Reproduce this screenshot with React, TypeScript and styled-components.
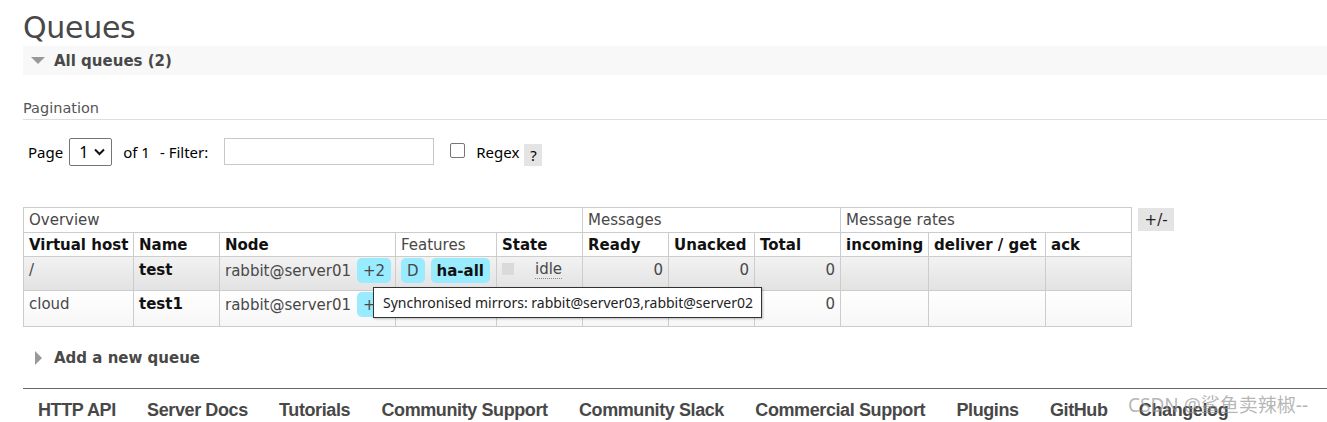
import React from 'react'
import styled, { createGlobalStyle } from 'styled-components'

const GlobalStyle = createGlobalStyle`
  html, body {
    margin: 0;
    padding: 0;
    background: #fff;
  }
  body {
    font-family: 'DejaVu Sans', Verdana, sans-serif;
    font-size: 15px;
    color: #484848;
  }
`

const Page = styled.div`
  position: relative;
  width: 1327px;
  height: 422px;
  overflow: hidden;
  padding-left: 23px;
  box-sizing: border-box;
`

const Title = styled.h1`
  margin: 0;
  padding-top: 10px;
  height: 36px;
  font-size: 30px;
  font-weight: normal;
  line-height: 36px;
  color: #484848;
  letter-spacing: -0.3px;
`

const SectionBar = styled.div`
  display: flex;
  align-items: center;
  height: 29px;
  background: #f8f8f8;
  padding-left: 8px;
  font-weight: bold;
  font-size: 15px;
  color: #484848;
`

const Triangle = styled.span<{ $open?: boolean }>`
  display: inline-block;
  width: 0;
  height: 0;
  ${(p) =>
    p.$open
      ? `margin-right: 9px; border-left: 7px solid transparent; border-right: 7px solid transparent; border-top: 7px solid #999;`
      : `margin-right: 12px; border-top: 7px solid transparent; border-bottom: 7px solid transparent; border-left: 7px solid #999;`}
`

const SubHeading = styled.div`
  margin-top: 23px;
  height: 21px;
  border-bottom: 1px solid #ddd;
  font-size: 14.5px;
  color: #555;
  line-height: 20px;
`

const FilterRow = styled.div`
  display: flex;
  align-items: center;
  margin-top: 18px;
  padding-left: 5px;
  height: 28px;
  color: #000;
  font-family: 'Noto Sans', 'DejaVu Sans', sans-serif;
  font-size: 15px;
`

const Label = styled.span<{ $gap?: number }>`
  margin-right: ${(p) => p.$gap ?? 6}px;
`

const Select = styled.div`
  display: flex;
  align-items: center;
  justify-content: space-between;
  width: 43px;
  height: 28px;
  box-sizing: border-box;
  border: 1px solid #767676;
  border-radius: 2px;
  padding: 0 6px 0 9px;
  margin: 0 11px 0 6px;
  font-size: 16px;
`

const TextInput = styled.div`
  width: 210px;
  height: 27px;
  box-sizing: border-box;
  border: 1px solid #c8c8c8;
  margin-right: 16px;
  margin-bottom: 1px;
`

const CheckBox = styled.span`
  display: inline-block;
  width: 13px;
  height: 13px;
  border: 1px solid #767676;
  border-radius: 2px;
  margin-right: 11px;
  margin-bottom: 3px;
`

const HelpBox = styled.span`
  display: inline-flex;
  align-items: center;
  justify-content: center;
  width: 18px;
  height: 22px;
  background: #e4e4e4;
  margin-left: 5px;
  margin-top: 6px;
`

const TableArea = styled.div`
  display: flex;
  align-items: flex-start;
  margin-top: 41px;
`

const Table = styled.table`
  border-collapse: collapse;
  table-layout: fixed;
  width: 1108px;
  font-size: 15px;
`

const GroupTh = styled.th`
  border: 1px solid #ccc;
  height: 24px;
  padding: 0 5px;
  text-align: left;
  font-weight: normal;
  color: #484848;
  line-height: 22px;
`

const Th = styled.th<{ $light?: boolean }>`
  border: 1px solid #ccc;
  height: 23px;
  padding: 0 5px;
  text-align: left;
  font-weight: ${(p) => (p.$light ? 'normal' : 'bold')};
  color: ${(p) => (p.$light ? '#484848' : '#111')};
  white-space: nowrap;
  line-height: 22px;
`

const Tr = styled.tr<{ $alt?: boolean }>`
  background: ${(p) =>
    p.$alt ? 'linear-gradient(#f2f2f2, #e2e2e2)' : 'linear-gradient(#ffffff, #f6f6f6)'};
`

const Td = styled.td<{ $h: number; $right?: boolean; $bold?: boolean }>`
  border: 1px solid #ccc;
  height: ${(p) => p.$h}px;
  padding: 3px 5px 0;
  vertical-align: top;
  text-align: ${(p) => (p.$right ? 'right' : 'left')};
  font-weight: ${(p) => (p.$bold ? 'bold' : 'normal')};
  color: ${(p) => (p.$bold ? '#111' : '#484848')};
  white-space: nowrap;
  line-height: 20px;
  box-sizing: border-box;
`

const NodeCell = styled.div`
  display: flex;
  align-items: center;
  gap: 6px;
  margin-top: -2px;
`

const Badge = styled.span<{ $bold?: boolean }>`
  display: inline-flex;
  align-items: center;
  justify-content: center;
  height: 25px;
  padding: 0 6px;
  border-radius: 5px;
  background: #99ebff;
  font-weight: ${(p) => (p.$bold ? 'bold' : 'normal')};
  color: ${(p) => (p.$bold ? '#111' : '#484848')};
`

const StateCell = styled.div`
  display: flex;
  align-items: flex-start;
`

const StateBox = styled.span`
  display: inline-block;
  width: 12px;
  height: 12px;
  background: #dadada;
  margin: 3px 21px 0 0;
`

const Idle = styled.span`
  border-bottom: 1px dotted #888;
  line-height: 18px;
`

const ToggleBtn = styled.span`
  display: inline-flex;
  align-items: center;
  justify-content: center;
  width: 36px;
  height: 23px;
  margin: 1px 0 0 6px;
  background: #e4e4e4;
  color: #222;
  font-size: 15px;
`

const AddRow = styled.div`
  display: flex;
  align-items: center;
  margin-top: 21px;
  padding-left: 12px;
  height: 20px;
  font-weight: bold;
  font-size: 15px;
  color: #484848;
`

const FooterRule = styled.div`
  margin-top: 20px;
  border-top: 1px solid #666;
`

const Footer = styled.ul`
  display: flex;
  margin: 0;
  padding: 11px 0 0 15px;
  list-style: none;
  font-family: 'Liberation Sans', Arial, sans-serif;
  font-weight: bold;
  font-size: 18px;
  line-height: 20px;
  color: #484848;
`

const FooterLink = styled.li`
  margin-right: 31.3px;
  letter-spacing: -0.4px;
`

const Tooltip = styled.div`
  position: absolute;
  left: 373px;
  top: 287px;
  width: 389px;
  height: 31px;
  box-sizing: border-box;
  border: 1px solid #333;
  background: #fff;
  box-shadow: 1px 1px 2px rgba(0, 0, 0, 0.25);
  display: flex;
  align-items: center;
  padding-left: 9px;
  font-family: 'Noto Sans', 'Open Sans', sans-serif;
  font-size: 14px;
  color: #222;
  white-space: nowrap;
`

const Watermark = styled.div`
  position: absolute;
  left: 1128px;
  top: 390px;
  font-family: 'Noto Sans', 'Noto Sans CJK SC', sans-serif;
  font-size: 19px;
  color: rgba(150, 150, 150, 0.7);
  white-space: nowrap;
`

const colWidths = [110, 86, 176, 101, 86, 86, 86, 86, 88, 117, 86]

interface QueueRow {
  vhost: string
  name: string
  total: string
  ready: string
  unacked: string
}

const rows: QueueRow[] = [
  { vhost: '/', name: 'test', ready: '0', unacked: '0', total: '0' },
  { vhost: 'cloud', name: 'test1', ready: '0', unacked: '0', total: '0' },
]

const footerLinks = [
  'HTTP API',
  'Server Docs',
  'Tutorials',
  'Community Support',
  'Community Slack',
  'Commercial Support',
  'Plugins',
  'GitHub',
  'Changelog',
]

export default function App() {
  return (
    <>
      <GlobalStyle />
      <Page>
        <Title>Queues</Title>
        <SectionBar>
          <Triangle $open />
          All queues (2)
        </SectionBar>
        <SubHeading>Pagination</SubHeading>
        <FilterRow>
          <Label $gap={0}>Page</Label>
          <Select>
            1
            <svg width="11" height="8" viewBox="0 0 11 8">
              <path d="M1 1.5 L5.5 6 L10 1.5" fill="none" stroke="#111" strokeWidth="2" />
            </svg>
          </Select>
          <Label $gap={10}>of 1</Label>
          <Label $gap={16}>- Filter:</Label>
          <TextInput />
          <CheckBox />
          <span>Regex</span>
          <HelpBox>?</HelpBox>
        </FilterRow>

        <TableArea>
          <Table>
            <colgroup>
              {colWidths.map((w, i) => (
                <col key={i} style={{ width: w }} />
              ))}
            </colgroup>
            <thead>
              <tr>
                <GroupTh colSpan={5}>Overview</GroupTh>
                <GroupTh colSpan={3}>Messages</GroupTh>
                <GroupTh colSpan={3}>Message rates</GroupTh>
              </tr>
              <tr>
                <Th>Virtual host</Th>
                <Th>Name</Th>
                <Th>Node</Th>
                <Th $light>Features</Th>
                <Th>State</Th>
                <Th>Ready</Th>
                <Th>Unacked</Th>
                <Th>Total</Th>
                <Th>incoming</Th>
                <Th>deliver / get</Th>
                <Th>ack</Th>
              </tr>
            </thead>
            <tbody>
              {rows.map((r, i) => {
                const h = i === 0 ? 34 : 36
                return (
                  <Tr key={r.name} $alt={i === 0}>
                    <Td $h={h}>{r.vhost}</Td>
                    <Td $h={h} $bold>
                      {r.name}
                    </Td>
                    <Td $h={h}>
                      <NodeCell>
                        rabbit@server01
                        <Badge>+2</Badge>
                      </NodeCell>
                    </Td>
                    <Td $h={h}>
                      <NodeCell>
                        <Badge>D</Badge>
                        <Badge $bold>ha-all</Badge>
                      </NodeCell>
                    </Td>
                    <Td $h={h}>
                      <StateCell>
                        <StateBox />
                        <Idle>idle</Idle>
                      </StateCell>
                    </Td>
                    <Td $h={h} $right>
                      {r.ready}
                    </Td>
                    <Td $h={h} $right>
                      {r.unacked}
                    </Td>
                    <Td $h={h} $right>
                      {r.total}
                    </Td>
                    <Td $h={h} />
                    <Td $h={h} />
                    <Td $h={h} />
                  </Tr>
                )
              })}
            </tbody>
          </Table>
          <ToggleBtn>+/-</ToggleBtn>
        </TableArea>

        <AddRow>
          <Triangle />
          Add a new queue
        </AddRow>
        <FooterRule />
        <Footer>
          {footerLinks.map((l) => (
            <FooterLink key={l}>{l}</FooterLink>
          ))}
        </Footer>

        <Tooltip>Synchronised mirrors: rabbit@server03,rabbit@server02</Tooltip>
        <Watermark>CSDN @鲨鱼卖辣椒--</Watermark>
      </Page>
    </>
  )
}
